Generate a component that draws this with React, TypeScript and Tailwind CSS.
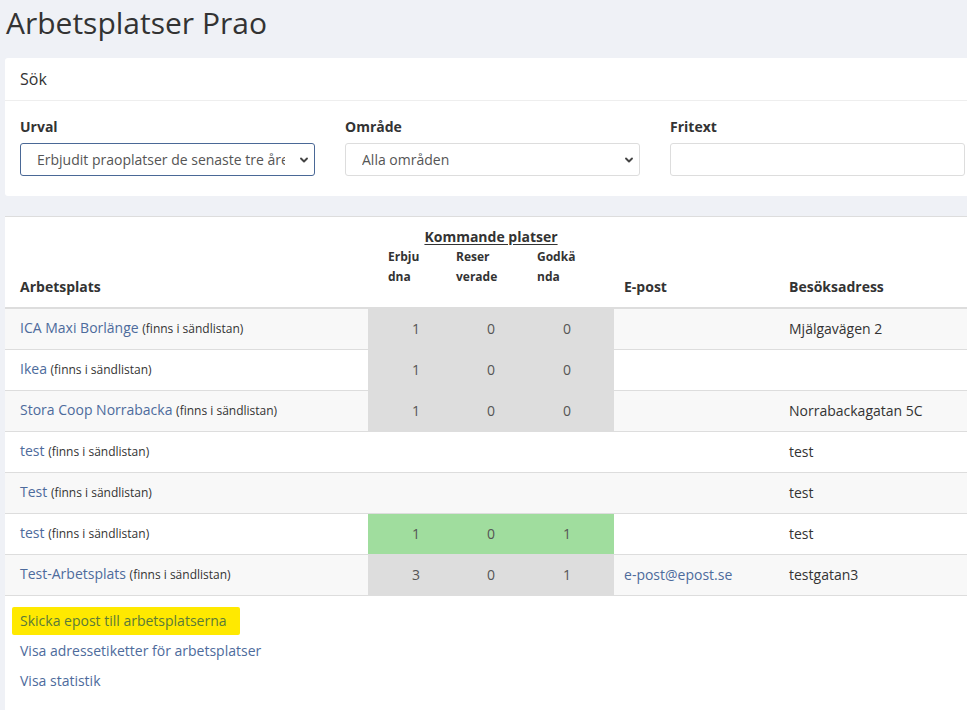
import React from 'react';

type Row = {
  name: string;
  counts?: [number, number, number];
  tone?: 'gray' | 'green';
  email?: string;
  address?: string;
};

const rows: Row[] = [
  { name: 'ICA Maxi Borlänge', counts: [1, 0, 0], tone: 'gray', address: 'Mjälgavägen 2' },
  { name: 'Ikea', counts: [1, 0, 0], tone: 'gray' },
  { name: 'Stora Coop Norrabacka', counts: [1, 0, 0], tone: 'gray', address: 'Norrabackagatan 5C' },
  { name: 'test', address: 'test' },
  { name: 'Test', address: 'test' },
  { name: 'test', counts: [1, 0, 1], tone: 'green', address: 'test' },
  { name: 'Test-Arbetsplats', counts: [3, 0, 1], tone: 'gray', email: 'e-post@epost.se', address: 'testgatan3' },
];

const Chevron = () => (
  <svg
    className="pointer-events-none absolute right-[5px] top-1/2 -translate-y-1/2"
    width="12"
    height="12"
    viewBox="0 0 16 16"
    fill="none"
    stroke="#444"
    strokeWidth="2.5"
    strokeLinecap="round"
    strokeLinejoin="round"
  >
    <path d="M4 6l4 4 4-4" />
  </svg>
);

const Field: React.FC<{ label: string; children: React.ReactNode }> = ({ label, children }) => (
  <div className="flex flex-col">
    <label className="text-[14px] leading-[20px] font-bold text-[#333] mb-[6px]">{label}</label>
    {children}
  </div>
);

export default function App() {
  return (
    <div
      className="h-[710px] w-[967px] overflow-hidden bg-[#eff1f6] pl-[5px] text-[#333]"
      style={{ fontFamily: '"Open Sans", "Liberation Sans", sans-serif' }}
    >
      <h1 className="pl-px pt-[2px] text-[30px] leading-[42px] font-normal text-[#333] mb-[14px]">
        Arbetsplatser Prao
      </h1>

      <section className="w-[975px] bg-white rounded-[3px]">
        <div className="h-[43px] flex items-center px-[15px] border-b border-[#eeeeee] text-[16px]">Sök</div>
        <div className="grid grid-cols-3 gap-[30px] px-[15px] pt-[16px] pb-[20px]">
          <Field label="Urval">
            <div className="relative">
              <select className="appearance-none w-full h-[33px] border border-[#4a6896] rounded-[3px] pl-[16px] pr-[29px] text-[14px] text-[#555] bg-white outline-none">
                <option>Erbjudit praoplatser de senaste tre åren</option>
              </select>
              <Chevron />
            </div>
          </Field>
          <Field label="Område">
            <div className="relative">
              <select className="appearance-none w-full h-[33px] border border-[#dddddd] rounded-[3px] pl-[16px] pr-[29px] text-[14px] text-[#555] bg-white outline-none">
                <option>Alla områden</option>
              </select>
              <Chevron />
            </div>
          </Field>
          <Field label="Fritext">
            <input className="w-full h-[33px] border border-[#dddddd] rounded-[3px] px-[12px] text-[14px] outline-none" />
          </Field>
        </div>
      </section>

      <section className="mt-[20px] w-[975px] bg-white border-t border-[#dddddd] pb-[40px]">
        <table className="w-full table-fixed border-collapse text-[14px]">
          <colgroup>
            <col className="w-[363px]" />
            <col className="w-[73px]" />
            <col className="w-[76px]" />
            <col className="w-[97px]" />
            <col className="w-[160px]" />
            <col />
          </colgroup>
          <thead>
            <tr>
              <th rowSpan={2} className="align-bottom text-left pl-[15px] pb-[10px] leading-[20px] font-bold">
                Arbetsplats
              </th>
              <th colSpan={3} className="pt-[10px] leading-[20px] font-bold text-center">
                <span className="underline underline-offset-2">Kommande platser</span>
              </th>
              <th rowSpan={2} className="align-bottom text-left pl-[10px] pb-[10px] leading-[20px] font-bold">
                E-post
              </th>
              <th rowSpan={2} className="align-bottom text-left pl-[15px] pb-[10px] leading-[20px] font-bold">
                Besöksadress
              </th>
            </tr>
            <tr className="text-[12px] leading-[20px] font-bold text-left">
              <th className="align-top pl-[20px] pb-[20px]">
                Erbju
                <br />
                dna
              </th>
              <th className="align-top pl-[15px] pb-[20px]">
                Reser
                <br />
                verade
              </th>
              <th className="align-top pl-[20px] pb-[20px]">
                Godkä
                <br />
                nda
              </th>
            </tr>
          </thead>
          <tbody className="border-t-2 border-[#dddddd]">
            {rows.map((r, i) => {
              const cell =
                r.tone === 'gray' ? 'bg-[#dddddd]' : r.tone === 'green' ? 'bg-[#a0dd9e]' : '';
              return (
                <tr key={i} className={`border-b border-[#dddddd] ${i % 2 === 0 ? 'bg-[#f8f8f8]' : 'bg-white'}`}>
                  <td className="h-[41px] pl-[15px] leading-[20px]">
                    <a href="#" className="text-[#4d6b9c]">{r.name}</a>{' '}
                    <span className="text-[12px] text-[#333]">(finns i sändlistan)</span>
                  </td>
                  <td className={`${cell} pl-[44px] text-[#555]`}>{r.counts?.[0]}</td>
                  <td className={`${cell} pl-[46px] text-[#555]`}>{r.counts?.[1]}</td>
                  <td className={`${cell} pl-[46px] text-[#555]`}>{r.counts?.[2]}</td>
                  <td className="pl-[10px]">
                    {r.email && <a href="#" className="text-[#4d6b9c]">{r.email}</a>}
                  </td>
                  <td className="pl-[15px] text-[#333]">{r.address}</td>
                </tr>
              );
            })}
          </tbody>
        </table>

        <div className="flex flex-col items-start gap-[10px] pl-[15px] pt-[15px] text-[14px] leading-[20px] text-[#4d6b9c]">
          <a href="#" className="block -ml-[8px] -my-[4px] pl-[8px] pr-[13px] py-[4px] leading-[20px] bg-[#ffe900] rounded-[2px] text-[#5a7a3a]">
            Skicka epost till arbetsplatserna
          </a>
          <a href="#">Visa adressetiketter för arbetsplatser</a>
          <a href="#">Visa statistik</a>
        </div>
      </section>
    </div>
  );
}
